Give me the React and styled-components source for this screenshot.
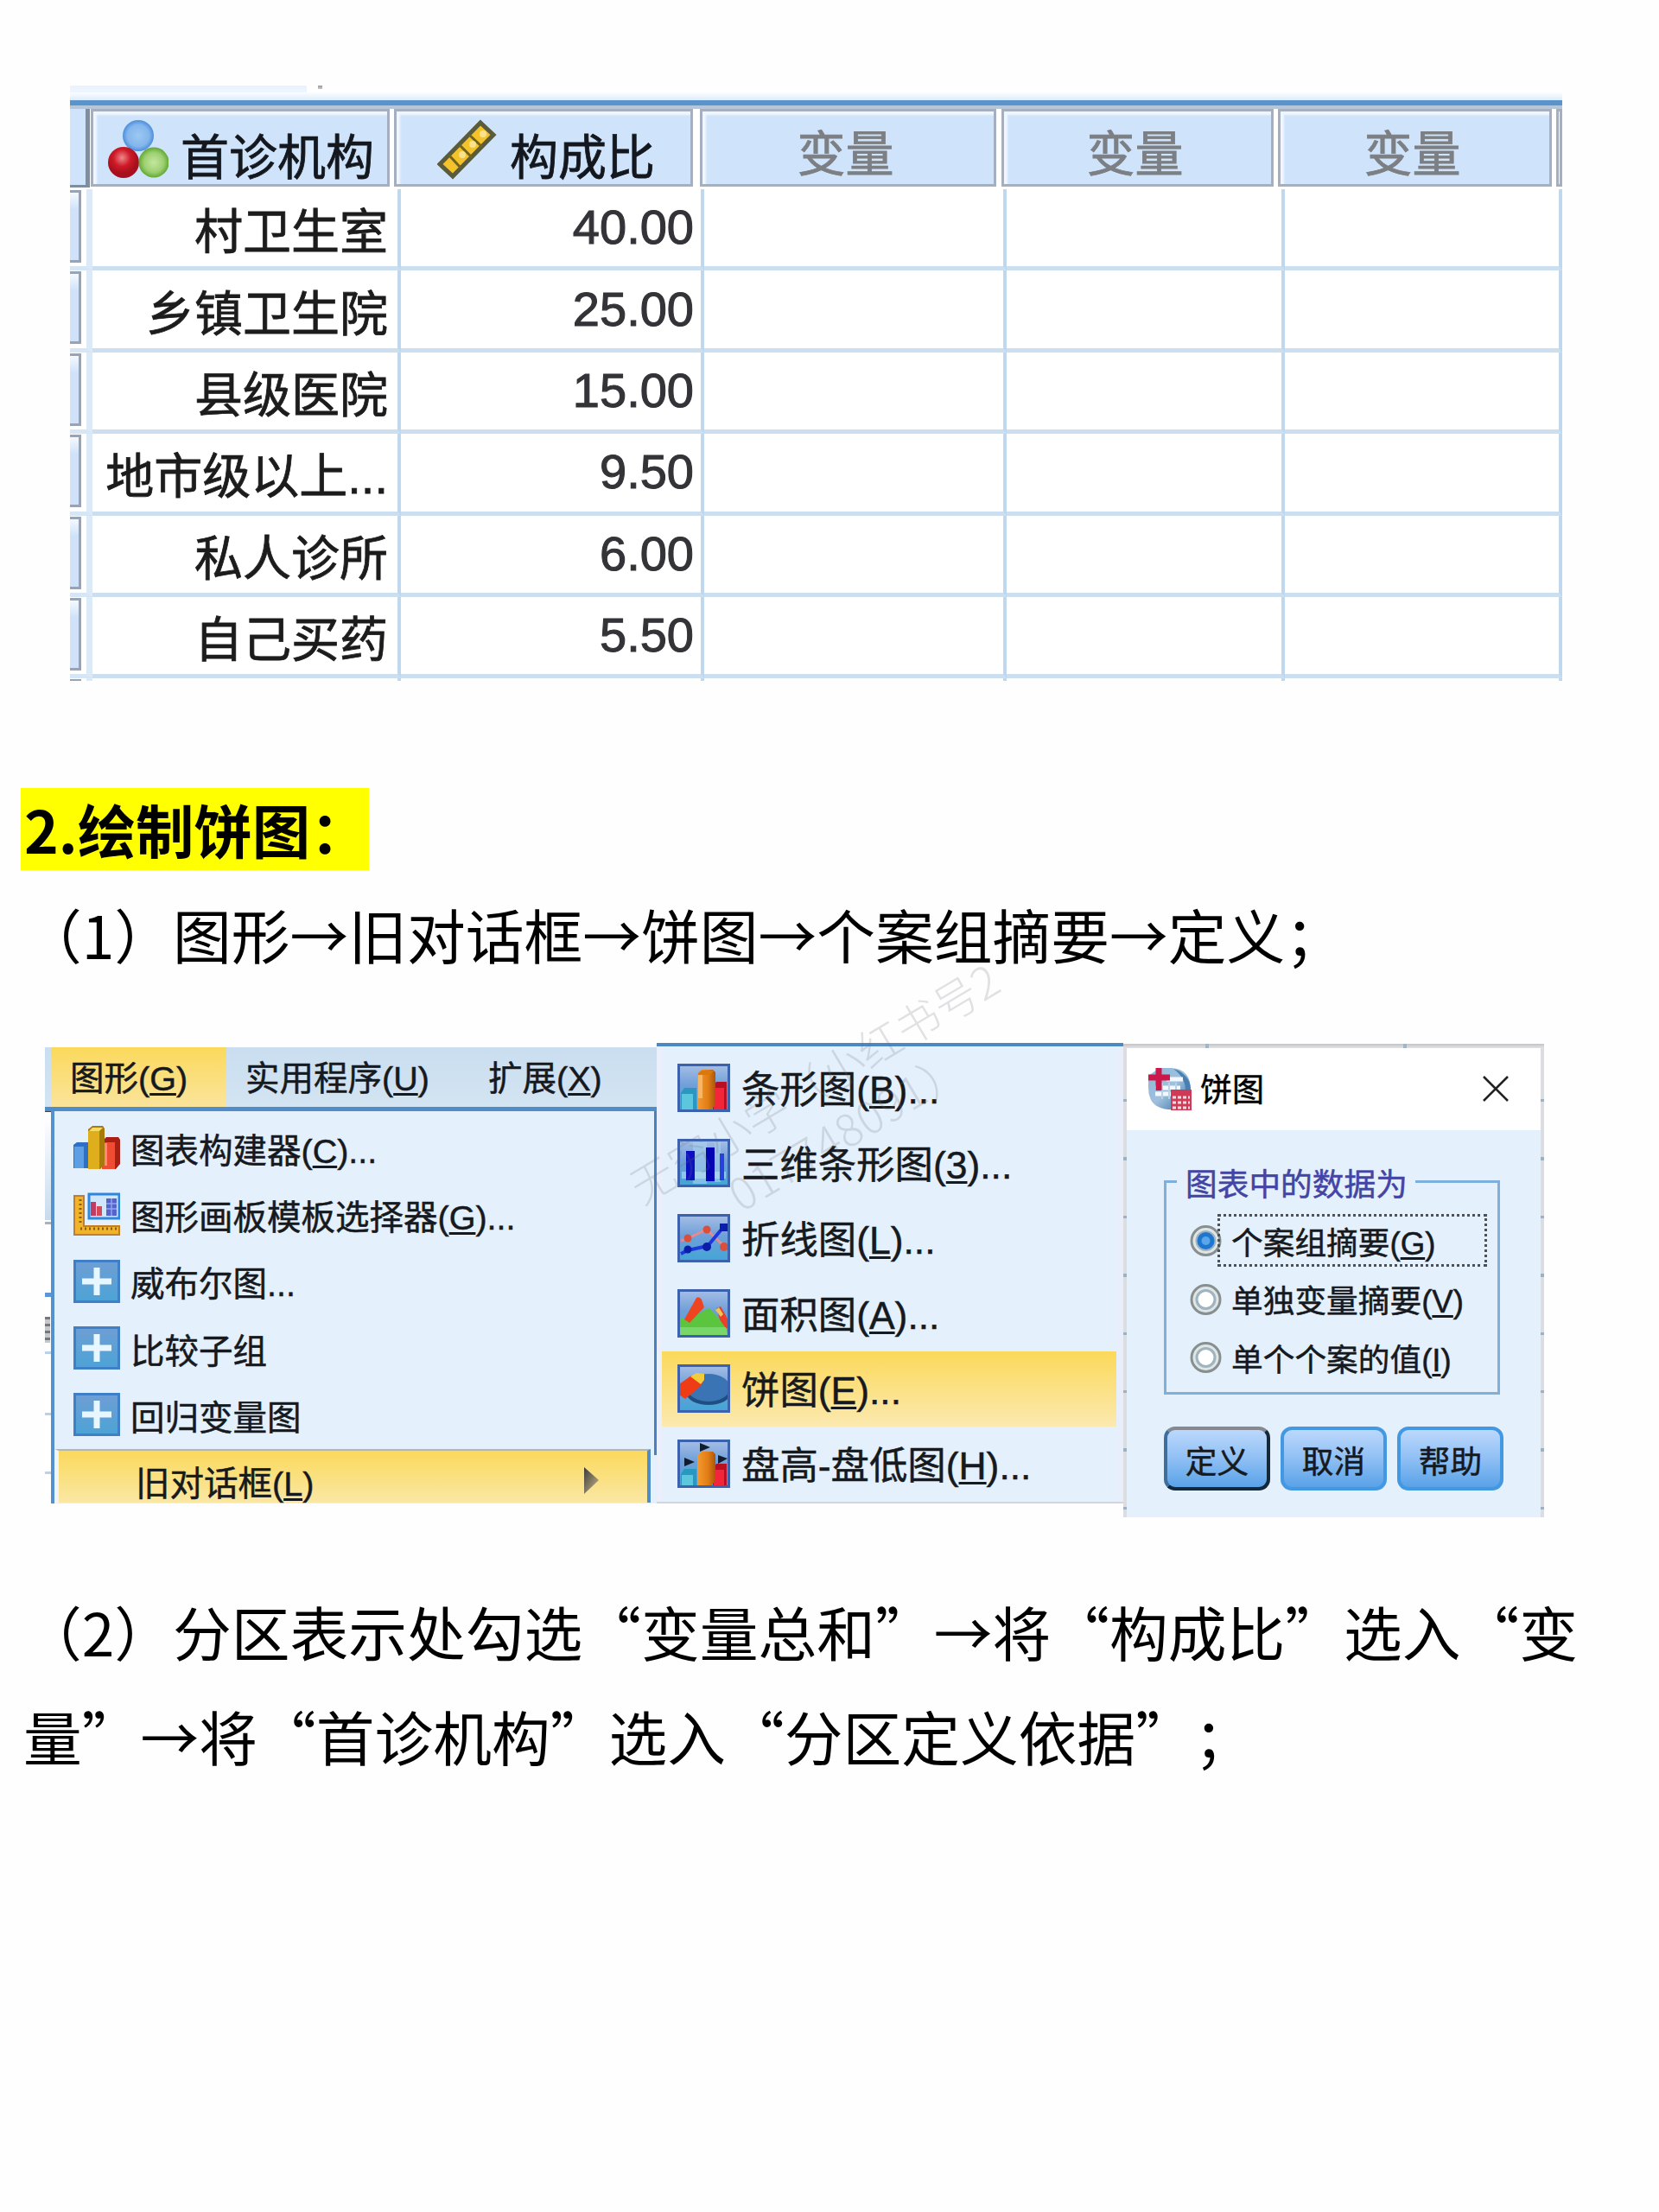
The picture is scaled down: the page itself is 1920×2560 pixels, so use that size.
import styled, { createGlobalStyle, css } from 'styled-components'

const rows = [
  { name: '村卫生室', value: '40.00' },
  { name: '乡镇卫生院', value: '25.00' },
  { name: '县级医院', value: '15.00' },
  { name: '地市级以上...', value: '9.50' },
  { name: '私人诊所', value: '6.00' },
  { name: '自己买药', value: '5.50' },
]

const graphMenu = [
  { icon: <BuilderIcon />, label: '图表构建器', hotkey: 'C', dots: true },
  { icon: <TemplateIcon />, label: '图形画板模板选择器', hotkey: 'G', dots: true },
  { icon: <PlusIcon />, label: '威布尔图', dots: true },
  { icon: <PlusIcon />, label: '比较子组' },
  { icon: <PlusIcon />, label: '回归变量图' },
]

const chartMenu = [
  { icon: <BarChartIcon />, label: '条形图', hotkey: 'B' },
  { icon: <Bar3dIcon />, label: '三维条形图', hotkey: '3' },
  { icon: <LineChartIcon />, label: '折线图', hotkey: 'L' },
  { icon: <AreaChartIcon />, label: '面积图', hotkey: 'A' },
  { icon: <PieChartIcon />, label: '饼图', hotkey: 'E', active: true },
  { icon: <HighLowIcon />, label: '盘高-盘低图', hotkey: 'H' },
]

const options = [
  { label: '个案组摘要', hotkey: 'G', checked: true },
  { label: '单独变量摘要', hotkey: 'V' },
  { label: '单个个案的值', hotkey: 'I' },
]

function NominalIcon() {
  return (
    <svg width="70" height="68" viewBox="0 0 70 68">
      <defs>
        <radialGradient id="ballBlue">
          <stop offset="0" stopColor="#9cc8f2" />
          <stop offset="0.7" stopColor="#84b6ec" />
          <stop offset="1" stopColor="#4d8edb" />
        </radialGradient>
        <radialGradient id="ballRed" cx="0.45" cy="0.35">
          <stop offset="0" stopColor="#ee8a8a" />
          <stop offset="0.55" stopColor="#cf1a28" />
          <stop offset="1" stopColor="#a80f1c" />
        </radialGradient>
        <radialGradient id="ballGreen">
          <stop offset="0" stopColor="#c4e6a0" />
          <stop offset="0.65" stopColor="#9dd070" />
          <stop offset="1" stopColor="#62a834" />
        </radialGradient>
      </defs>
      <circle cx="35" cy="18" r="18" fill="url(#ballBlue)" />
      <circle cx="18" cy="49" r="18" fill="url(#ballRed)" />
      <circle cx="53" cy="49" r="17.5" fill="url(#ballGreen)" />
    </svg>
  )
}

function RulerIcon() {
  return (
    <svg width="70" height="70" viewBox="0 0 70 70">
      <polygon points="3,52 50,4 65,18 18,66" fill="#f4c22b" stroke="#5a5b3a" strokeWidth="5" />
      <g stroke="#6e6420" strokeWidth="3">
        <path d="M14 42 L27 56" />
        <path d="M26 30 L40 44" />
        <path d="M37 18 L52 32" />
      </g>
      <g fill="#fbe28a">
        <circle cx="53" cy="17" r="4" />
        <circle cx="41" cy="29" r="4" />
        <circle cx="29" cy="41" r="4" />
      </g>
    </svg>
  )
}

function BuilderIcon() {
  return (
    <svg width="54" height="50" viewBox="0 0 54 50">
      <path d="M0 22 L4 19 H17 V49 H0Z" fill="#2f6fc4" />
      <path d="M1 24 H12 V49 H1Z" fill="#5d9fe4" />
      <path d="M33 18 L38 13 H52 L54 16 V44 L49 50 H33Z" fill="#a81f16" />
      <path d="M33 19 H48 V50 H33Z" fill="#ee4d33" />
      <path d="M17 4 L22 0 H34 L36 3 V45 L31 50 H17Z" fill="#a77a0c" />
      <path d="M17 6 H30 V50 H17Z" fill="#dfae1c" />
      <path d="M18 6 L22 2 H34 L30 6Z" fill="#f7dc63" />
      <path d="M36 20 H39 V46 H36Z" fill="#f98b78" />
    </svg>
  )
}

function TemplateIcon() {
  return (
    <svg width="54" height="50" viewBox="0 0 54 50">
      <path d="M1 4 H12 V39 H53 V49 H1Z" fill="#f0b429" stroke="#c07f28" strokeWidth="2" />
      <path d="M8 8 V36 M8 42 H50" stroke="#8f5a12" strokeWidth="3" strokeDasharray="2 3" />
      <rect x="18" y="2" width="35" height="28" fill="#cfe6fb" stroke="#2f86dd" strokeWidth="3" />
      <rect x="20" y="11" width="6" height="16" fill="#c23b63" />
      <rect x="27" y="16" width="6" height="11" fill="#d24a58" />
      <rect x="38" y="7" width="12" height="20" fill="#5663cc" />
      <path d="M38 13 H50 M38 19 H50 M44 7 V27" stroke="#8fa8ec" strokeWidth="1.5" />
    </svg>
  )
}

function PlusIcon() {
  return (
    <svg width="54" height="50" viewBox="0 0 54 50">
      <defs>
        <linearGradient id="plusBg" x2="0" y2="1">
          <stop offset="0" stopColor="#6e9ed4" />
          <stop offset="1" stopColor="#4ca3d6" />
        </linearGradient>
      </defs>
      <rect x="1.5" y="1.5" width="51" height="47" fill="url(#plusBg)" stroke="#3f7fc8" strokeWidth="3" />
      <path d="M27 9 V41 M10 25 H44" stroke="#e8f6ff" strokeWidth="7" />
    </svg>
  )
}

function ChartFrame({ children }) {
  return (
    <svg width="61" height="56" viewBox="0 0 61 56">
      <defs>
        <linearGradient id="chartBg" x2="0" y2="1">
          <stop offset="0" stopColor="#a9c0e6" />
          <stop offset="0.45" stopColor="#6f9fd8" />
          <stop offset="1" stopColor="#3fa6d6" />
        </linearGradient>
        <linearGradient id="orangeBar" x2="1">
          <stop offset="0" stopColor="#f59a2e" />
          <stop offset="0.6" stopColor="#e07c14" />
          <stop offset="1" stopColor="#a9560c" />
        </linearGradient>
      </defs>
      <rect width="61" height="56" fill="url(#chartBg)" />
      {children}
      <rect x="1.5" y="1.5" width="58" height="53" fill="none" stroke="#3c62ae" strokeWidth="3" />
    </svg>
  )
}

function BarChartIcon() {
  return (
    <ChartFrame>
      <path d="M4 34 L8 28 H22 V53 H4Z" fill="#2898c0" />
      <path d="M5 35 H18 V53 H5Z" fill="#5cc6dc" />
      <path d="M41 27 L45 21 H57 V53 H41Z" fill="#b80f22" />
      <path d="M42 28 H54 V53 H42Z" fill="#f3253a" />
      <path d="M23 11 L28 7 H41 L44 10 V48 L39 53 H23Z" fill="url(#orangeBar)" />
      <path d="M24 11 L28 8 H42 L38 13 H24Z" fill="#d9780f" />
      <path d="M24 13 H29 V40 H24Z" fill="#f9b560" />
    </ChartFrame>
  )
}

function Bar3dIcon() {
  return (
    <ChartFrame>
      <path d="M18 4 H34 V52 H18Z M43 4 H50 V50 H43Z" fill="#a8d2ee" opacity="0.6" />
      <path d="M5 38 H56 V46 H5Z" fill="#bfe4f4" opacity="0.55" />
      <rect x="10" y="14" width="10" height="34" fill="#0b0fc0" />
      <rect x="33" y="10" width="10" height="39" fill="#0406b4" />
      <rect x="49" y="17" width="5" height="31" fill="#2a3fe0" />
    </ChartFrame>
  )
}

function LineChartIcon() {
  return (
    <ChartFrame>
      <path d="M4 31 L12 28 L34 18 L55 38" fill="none" stroke="#e58a90" strokeWidth="3" />
      <path d="M4 46 L12 42 L35 37 L55 13" fill="none" stroke="#1e36dc" strokeWidth="4" />
      <g fill="#d8503c">
        <circle cx="12" cy="28" r="4.5" />
        <circle cx="34" cy="18" r="4.5" />
        <circle cx="54" cy="38" r="5" />
      </g>
      <g fill="#0a1eaa">
        <circle cx="12" cy="41" r="4.5" />
        <circle cx="34" cy="38" r="5" />
        <path d="M49 11 H58 V20 H49Z" />
      </g>
    </ChartFrame>
  )
}

function AreaChartIcon() {
  return (
    <ChartFrame>
      <path d="M45 22 L50 20 L59 36 V45 H52Z" fill="#e8402a" />
      <path d="M44 24 L48 21 L53 29 L50 32Z" fill="#f0c45a" />
      <path d="M3 33 L12 36 L30 25 L37 22 L48 34 L58 48 V53 H3Z" fill="#5cc540" />
      <path d="M8 35 L22 10 Q25 8 28 12 L31 21 L14 39Z" fill="#ee4420" />
      <path d="M3 44 H56 L58 53 H3Z" fill="#86dd7a" opacity="0.7" />
    </ChartFrame>
  )
}

function PieChartIcon() {
  return (
    <ChartFrame>
      <ellipse cx="36" cy="34" rx="25" ry="13" fill="#1f4f82" />
      <ellipse cx="36" cy="27" rx="25" ry="16" fill="#3a74b4" />
      <path d="M2 23 L16 13 L31 18 L26 26 L9 40 L2 35Z" fill="#f03c14" />
      <path d="M15 14 L22 10 L31 11 V18 L27 23Z" fill="#f3cc3c" />
    </ChartFrame>
  )
}

function HighLowIcon() {
  return (
    <ChartFrame>
      <path d="M4 40 L8 34 H22 V53 H4Z" fill="#2898c0" />
      <path d="M5 41 H18 V53 H5Z" fill="#5cc6dc" />
      <path d="M41 34 L45 28 H57 V53 H41Z" fill="#b80f22" />
      <path d="M42 35 H54 V53 H42Z" fill="#f3253a" />
      <path d="M23 19 L28 14 H41 L44 17 V48 L39 53 H23Z" fill="url(#orangeBar)" />
      <path d="M26 4 L38 9 L26 14Z M8 21 L20 26 L8 31Z M47 18 L58 22 L47 28Z" fill="#101c30" />
    </ChartFrame>
  )
}

function AppIcon() {
  return (
    <svg width="51" height="50" viewBox="0 0 51 50">
      <defs>
        <linearGradient id="appBg" x2="1" y2="1">
          <stop offset="0" stopColor="#8fb7d8" />
          <stop offset="0.5" stopColor="#9fc0dd" />
          <stop offset="1" stopColor="#2f6aa3" />
        </linearGradient>
      </defs>
      <path d="M14 1 H28 Q50 2 50 27 V49 H24 Q1 47 1 24 V10Z" fill="url(#appBg)" />
      <path d="M36 4 Q50 12 50 27 H44 Q44 12 30 2Z" fill="#4a7fb2" />
      <path d="M22 14 H41 M9 24 H38 M9 31 H28" stroke="#f2f8fd" strokeWidth="5" />
      <path d="M17 18 V37 M25 18 V37 M33 18 V28" stroke="#b9d2e8" strokeWidth="2" />
      <path d="M13 1 V27 M1 12 H26" stroke="#cc1848" strokeWidth="7" />
      <rect x="27" y="26" width="24" height="24" fill="#d03a56" />
      <path d="M29 35 H49 M29 41 H49 M29 47 H49" stroke="#f6dfe4" strokeWidth="3" strokeDasharray="4 2" />
    </svg>
  )
}

function CloseIcon() {
  return (
    <svg width="30" height="30" viewBox="0 0 30 30">
      <path d="M1 1 L29 29 M29 1 L1 29" stroke="#222" strokeWidth="2.6" />
    </svg>
  )
}

function Radio({ checked }) {
  return (
    <svg width="38" height="38" viewBox="0 0 38 38">
      <circle cx="19.5" cy="20" r="16.5" fill="#dfe6e8" stroke="#87908f" strokeWidth="3" />
      <circle cx="19.5" cy="20" r="10.5" fill="#fff" stroke="#9fb4bf" strokeWidth="3" />
      {checked && <circle cx="19.5" cy="20" r="10" fill="#1f76cf" />}
      {checked && <circle cx="19.5" cy="20" r="5" fill="#5aa6ea" />}
    </svg>
  )
}

function Label({ text, hotkey, dots }) {
  return (
    <span>
      {text}
      {hotkey && (
        <>
          (<Hotkey>{hotkey}</Hotkey>)
        </>
      )}
      {dots && '...'}
    </span>
  )
}

function DataTable() {
  return (
    <Sheet>
      <SheetTop />
      <HeaderRow>
        <Corner />
        <HeaderCell $left={17}>
          <NominalIcon />
          <HeaderText>首诊机构</HeaderText>
        </HeaderCell>
        <HeaderCell $left={47}>
          <RulerIcon />
          <HeaderText>构成比</HeaderText>
        </HeaderCell>
        <HeaderCell $empty>变量</HeaderCell>
        <HeaderCell $empty>变量</HeaderCell>
        <HeaderCell $empty>变量</HeaderCell>
        <HeaderCell />
      </HeaderRow>
      {rows.map((row) => (
        <Row key={row.name}>
          <RowHead>
            <RowButton />
          </RowHead>
          <Cell>{row.name}</Cell>
          <Cell $number>{row.value}</Cell>
          <Cell />
          <Cell />
          <Cell />
        </Row>
      ))}
      <Row>
        <RowHead>
          <RowButton />
        </RowHead>
        <Cell />
        <Cell />
        <Cell />
        <Cell />
        <Cell />
      </Row>
    </Sheet>
  )
}

function GraphMenu() {
  return (
    <MenuWindow>
      <MenuBar>
        <MenuTab $width={203} $active>
          <Label text="图形" hotkey="G" />
        </MenuTab>
        <MenuTab $width={281}>
          <Label text="实用程序" hotkey="U" />
        </MenuTab>
        <MenuTab $width={217}>
          <Label text="扩展" hotkey="X" />
        </MenuTab>
      </MenuBar>
      <MenuBody>
        <Backdrop />
        <Dropdown>
          {graphMenu.map((item) => (
            <MenuItem key={item.label}>
              {item.icon}
              <Label text={item.label} hotkey={item.hotkey} dots={item.dots} />
            </MenuItem>
          ))}
          <LegacyItem>
            <Label text="旧对话框" hotkey="L" />
            <svg width="17" height="31" viewBox="0 0 17 31">
              <defs>
                <linearGradient id="arrowFill" x2="1" y2="1">
                  <stop offset="0" stopColor="#3a3a3a" />
                  <stop offset="1" stopColor="#c9b98a" />
                </linearGradient>
              </defs>
              <path d="M0 0 L17 15 L0 31Z" fill="url(#arrowFill)" />
            </svg>
          </LegacyItem>
        </Dropdown>
      </MenuBody>
    </MenuWindow>
  )
}

function ChartMenu() {
  return (
    <SubMenu>
      {chartMenu.map((item) => (
        <SubItem key={item.label} $active={item.active}>
          {item.icon}
          <Label text={item.label} hotkey={item.hotkey} dots />
        </SubItem>
      ))}
    </SubMenu>
  )
}

function PieDialog() {
  return (
    <Dialog>
      <TitleBar>
        <AppIcon />
        <Title>饼图</Title>
        <CloseIcon />
      </TitleBar>
      <DialogBody>
        <Group>
          <Legend>图表中的数据为</Legend>
          {options.map((option) => (
            <Option key={option.label}>
              <Radio checked={option.checked} />
              <OptionText $focused={option.checked}>
                <Label text={option.label} hotkey={option.hotkey} />
              </OptionText>
            </Option>
          ))}
        </Group>
        <Buttons>
          <Button $primary>定义</Button>
          <Button>取消</Button>
          <Button>帮助</Button>
        </Buttons>
      </DialogBody>
    </Dialog>
  )
}

function App() {
  return (
    <Page lang="zh-CN">
      <GlobalStyle />
      <DataTable />
      <Heading>2.绘制饼图：</Heading>
      <Text>（1）图形→旧对话框→饼图→个案组摘要→定义；</Text>
      <Figures>
        <GraphMenu />
        <ChartMenu />
        <PieDialog />
      </Figures>
      <Text>
        （2）分区表示处勾选“变量总和”→将“构成比”选入“变
        <br />
        量”→将“首诊机构”选入“分区定义依据”；
      </Text>
      <Watermark>
        无穷小学（小红书号2
        <WatermarkCode>017748091）</WatermarkCode>
      </Watermark>
    </Page>
  )
}

export default App

const GlobalStyle = createGlobalStyle`
  * {
    box-sizing: border-box;
  }

  body {
    margin: 0;
    background: #fff;
  }

  svg {
    display: block;
    flex: none;
  }
`

const Page = styled.main`
  position: relative;
  width: 1920px;
  height: 2560px;
  padding-top: 99px;
  overflow: hidden;
  background: #fefefe;
  color: #000;
  font-family: 'Liberation Sans', 'Noto Sans CJK SC', sans-serif;
  text-spacing-trim: space-all;
`

const Sheet = styled.section`
  width: 1727px;
  height: 689px;
  margin-left: 81px;
  overflow: hidden;
  background: #fff;
  color: #1c1c1c;
  font-size: 56px;
  white-space: nowrap;
  -webkit-text-stroke: 0.8px;
`

const SheetTop = styled.div`
  height: 27px;
  border-bottom: 4px solid #b3c6dc;
  background:
    linear-gradient(#5b93cb, #5b93cb) 0 17px / 100% 6px no-repeat,
    linear-gradient(#9a9a9a, #c8c8c8) 287px 0 / 5px 4px no-repeat,
    linear-gradient(#e9f2fd, #eef5fd) 0 0 / 274px 8px no-repeat,
    linear-gradient(#fff 30%, #dcebfb 75%);
`

const HeaderRow = styled.div`
  display: grid;
  grid-template-columns: 24px 346px 346px 343px 315px 317px 7px;
  column-gap: 5px;
  height: 93px;
  margin-right: -40px;

  & > :nth-child(2),
  & > :nth-child(3) {
    margin-left: -5px;
    margin-right: 5px;
  }

  & > :nth-child(4) {
    margin: 0 2px 0 -2px;
  }

  & > :nth-child(n + 5) {
    margin: 0 1px 0 -1px;
  }
`

const Corner = styled.div`
  width: 23px;
  height: 91px;
  border-right: 5px solid #7f8da0;
  border-bottom: 3px solid #7f8da0;
  background: #cfe4fb;
`

const HeaderCell = styled.div`
  display: flex;
  align-items: center;
  gap: 14px;
  height: 90px;
  padding: 3px 0 0 ${({ $left }) => $left || 0}px;
  border: 3px solid #a5afc0;
  background: #cfe4fb;
  box-shadow: inset 4px 4px 2px #f0f6fe;
  ${({ $empty }) =>
    $empty &&
    css`
      justify-content: center;
      padding-right: 6px;
      padding-top: 5px;
      color: #7c7f83;
    `}
`

const HeaderText = styled.span`
  padding-top: 10px;
  color: #14181e;
`

const Row = styled.div`
  display: grid;
  grid-template-columns: 26px 357px 351px 350px 322px 321px;
  height: 94.4px;
`

const RowHead = styled.div`
  border-right: 7px solid #dceaf8;
  border-bottom: 5px solid #d6e6f5;
`

const RowButton = styled.div`
  width: 13px;
  height: 84px;
  margin-top: 1px;
  border: solid #98a3b6;
  border-width: 3px 3px 3px 0;
  background: linear-gradient(#f4f9ff, #cfe2fa 25%);
`

const Cell = styled.div`
  display: flex;
  align-items: center;
  justify-content: flex-end;
  padding: ${({ $number }) => ($number ? '0 8px 2px 0' : '0 11px 0 0')};
  border-right: 4px solid #bfd8ee;
  border-bottom: 5px solid #cbdff0;
  ${({ $number }) =>
    $number &&
    css`
      color: #333338;
      -webkit-text-stroke: 1.1px #333338;
    `}
`

const Heading = styled.h2`
  width: 403px;
  height: 95px;
  margin: 124px 0 13px 24px;
  padding-left: 4px;
  background: #ff0;
  font: bold 67.4px/94px 'Noto Sans CJK SC', sans-serif;
  white-space: nowrap;
`

const Text = styled.p`
  margin: 0;
  padding-left: 27px;
  font: 67.75px/121.5px 'Noto Sans CJK SC', sans-serif;
  white-space: nowrap;
`

const Figures = styled.section`
  display: flex;
  align-items: flex-start;
  height: 549px;
  margin: 65px 0 71px 52px;
  color: #16191d;
  white-space: nowrap;
  -webkit-text-stroke: 0.5px;
`

const Hotkey = styled.span`
  text-decoration: underline;
  text-decoration-thickness: 3px;
  text-underline-offset: 3px;
`

const MenuWindow = styled.div`
  width: 708px;
  height: 528px;
  margin-top: 5px;
  font-size: 39.5px;
`

const MenuBar = styled.div`
  display: flex;
  height: 74px;
  padding-left: 7px;
  border-bottom: 5px solid #4f8cca;
  background: linear-gradient(#cadef0, #d3e4f2);
`

const MenuTab = styled.div`
  flex: none;
  width: ${({ $width }) => $width}px;
  padding: 4px 0 0 22px;
  ${({ $active }) =>
    $active &&
    css`
      background: linear-gradient(#fbd95c, #fae49c);
    `}
`

const MenuBody = styled.div`
  display: flex;
  height: 454px;
`

const Backdrop = styled.div`
  width: 7px;
  background:
    linear-gradient(#444, #444) 0 0 / 7px 1px no-repeat,
    linear-gradient(#fff, #c7dbee) 0 4px / 7px 122px no-repeat,
    linear-gradient(#a9b2ba, #a9b2ba) 0 128px / 7px 3px no-repeat,
    linear-gradient(#5c97d2, #5c97d2) 0 210px / 7px 5px no-repeat,
    repeating-linear-gradient(#777 0 3px, #c4c8cc 3px 8px) 0 238px / 6px 30px no-repeat,
    linear-gradient(#b9d2ea, #b9d2ea) 0 278px / 7px 3px no-repeat,
    linear-gradient(#b9d2ea, #b9d2ea) 0 349px / 7px 3px no-repeat,
    linear-gradient(#b9d2ea, #b9d2ea) 0 417px / 7px 3px no-repeat,
    #fff;
`

const Dropdown = styled.div`
  flex: 1;
  padding-top: 4px;
  border-left: 4px solid #5590cf;
  background:
    linear-gradient(#4682c0, #4682c0) 694px 0 / 3px 398px no-repeat,
    #e4f0fc;
`

const MenuItem = styled.div`
  display: flex;
  align-items: center;
  gap: 12px;
  height: 77.3px;
  padding-left: 22px;
`

const LegacyItem = styled.div`
  display: flex;
  align-items: center;
  justify-content: space-between;
  width: 690px;
  height: 62px;
  margin-top: 1px;
  padding: 10px 56px 0 89px;
  border-top: 2px solid #b9b7a4;
  border-right: 4px solid #4f8cca;
  border-left: 5px solid #f0f4fc;
  background: linear-gradient(#fbd95c, #fae7a4) padding-box;
`

const SubMenu = styled.div`
  width: 540px;
  height: 533px;
  padding: 5px 8px 0 6px;
  border-top: 4px solid #4b88c4;
  border-bottom: 2px solid #cfd6e0;
  background: linear-gradient(90deg, #ebeffc 6px, #e4f0fc 7px 531px, #e9eefb 535px);
  font-size: 44.4px;
`

const SubItem = styled.div`
  display: flex;
  align-items: center;
  gap: 13px;
  height: 87px;
  padding-left: 18px;
  ${({ $active }) =>
    $active &&
    css`
      background: linear-gradient(#fbd95a, #fbe9b0);
    `}

  & > span {
    margin-top: -3px;
  }
`

const Dialog = styled.div`
  width: 487px;
  height: 548px;
  margin-top: 1px;
  padding: 5px 4px 0;
  background:
    linear-gradient(#9fb6c8, #9fb6c8) 95px 0 / 4px 5px no-repeat,
    linear-gradient(#9fb6c8, #9fb6c8) 324px 0 / 4px 5px no-repeat,
    linear-gradient(#c4c4c6, #e2e2e4) 0 0 / 100% 5px no-repeat,
    repeating-linear-gradient(transparent 0 64px, #9fb0c4 64px 67.4px) 0 0 / 4px 100% no-repeat,
    repeating-linear-gradient(transparent 0 64px, #9fb0c4 64px 67.4px) 483px 0 / 4px 100% no-repeat,
    #dcdde0;
`

const TitleBar = styled.header`
  display: flex;
  align-items: center;
  height: 95px;
  padding: 0 37px 1px 24px;
  background: #fff;
`

const Title = styled.span`
  flex: 1;
  margin-top: -2px;
  padding-left: 10px;
  color: #000;
  font-size: 37px;
`

const DialogBody = styled.div`
  height: 448px;
  padding: 58px 40px 0 43px;
  background: #e4f0fc;
  font-size: 36.7px;
`

const Group = styled.div`
  width: 389px;
  height: 248px;
  padding: 0 12px 0 26px;
  border: 3px solid #7fb0dc;
`

const Legend = styled.div`
  width: 276px;
  height: 42px;
  margin: -20px 0 11px -14px;
  padding-left: 10px;
  background: #e4f0fc;
  color: #4444a4;
  line-height: 46px;
`

const Option = styled.div`
  display: flex;
  align-items: center;
  height: 67.6px;
`

const OptionText = styled.div`
  flex: 1;
  height: 61px;
  margin-left: -5px;
  padding: 4px 0 0 13px;
  border: 3px dotted ${({ $focused }) => ($focused ? '#4c5157' : 'transparent')};
  line-height: 55px;
`

const Buttons = styled.div`
  display: flex;
  gap: 12px;
  margin-top: 37px;
`

const Button = styled.button`
  width: 123px;
  height: 74px;
  padding: 2px 0 0;
  border: 4px solid #4398e2;
  border-radius: 13px;
  background: linear-gradient(#bcd8fc, #8fbff4 50%, #59a2e8);
  color: #16191d;
  font: inherit;
  ${({ $primary }) =>
    $primary &&
    css`
      border-color: #858a92 #14283c #14283c #3f6d9c;
    `}
`

const Watermark = styled.div`
  position: absolute;
  top: 1280px;
  left: 958px;
  color: rgba(110, 110, 120, 0.2);
  font: 300 51px/66px 'Noto Sans CJK SC', sans-serif;
  text-align: center;
  white-space: nowrap;
  transform: translate(-50%, -50%) rotate(-30.8deg);
  pointer-events: none;
`

const WatermarkCode = styled.div`
  padding-left: 10px;
  letter-spacing: 1.2px;
`
